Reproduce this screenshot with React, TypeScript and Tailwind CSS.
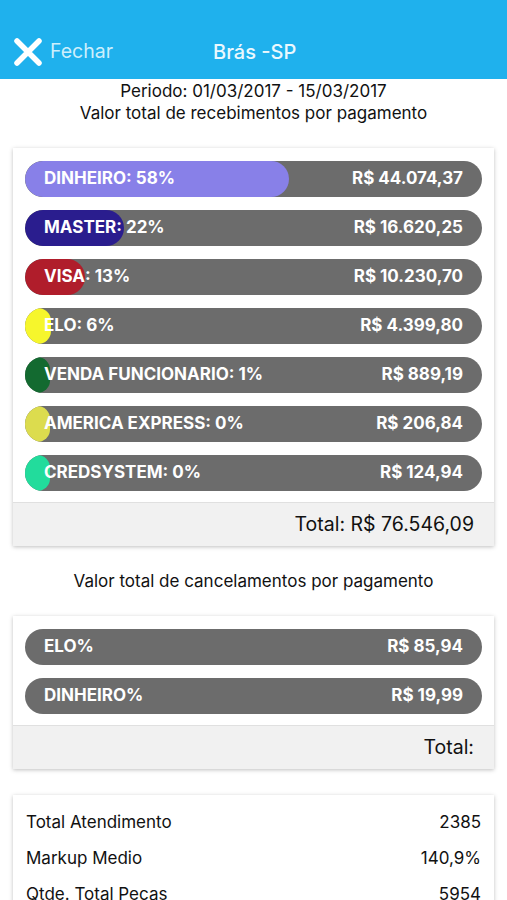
import React from "react";

type Bar = { label: string; value: string; fill: number; color: string };

const recebimentos: Bar[] = [
  { label: "DINHEIRO: 58%", value: "R$ 44.074,37", fill: 264, color: "#8880e8" },
  { label: "MASTER: 22%", value: "R$ 16.620,25", fill: 99, color: "#2a1d8e" },
  { label: "VISA: 13%", value: "R$ 10.230,70", fill: 60, color: "#b01d2b" },
  { label: "ELO: 6%", value: "R$ 4.399,80", fill: 26, color: "#f6f62c" },
  { label: "VENDA FUNCIONARIO: 1%", value: "R$ 889,19", fill: 25, color: "#136a30" },
  { label: "AMERICA EXPRESS: 0%", value: "R$ 206,84", fill: 25, color: "#dcdc4e" },
  { label: "CREDSYSTEM: 0%", value: "R$ 124,94", fill: 25, color: "#22dc9c" },
];

const cancelamentos: Bar[] = [
  { label: "ELO%", value: "R$ 85,94", fill: 0, color: "" },
  { label: "DINHEIRO%", value: "R$ 19,99", fill: 0, color: "" },
];

const resumo = [
  ["Total Atendimento", "2385"],
  ["Markup Medio", "140,9%"],
  ["Qtde. Total Pecas", "5954"],
];

function PayBar({ bar }: { bar: Bar }) {
  return (
    <div className="relative h-[36px] rounded-full bg-[#6c6c6c] overflow-hidden">
      {bar.fill > 0 && (
        <div
          className="absolute left-0 top-0 h-full rounded-full"
          style={{ width: bar.fill, backgroundColor: bar.color }}
        />
      )}
      <div className="relative flex h-full items-center justify-between pl-[19px] pr-[19px] text-[17px] font-bold text-white">
        <span>{bar.label}</span>
        <span>{bar.value}</span>
      </div>
    </div>
  );
}

function Card({ bars, total }: { bars: Bar[]; total: string }) {
  return (
    <div className="mx-[13px] bg-white shadow-[0_1px_4px_rgba(0,0,0,0.25)]">
      <div className="flex flex-col gap-[13px] px-[12px] pt-[13px] pb-[11px]">
        {bars.map((b) => (
          <PayBar key={b.label} bar={b} />
        ))}
      </div>
      <div className="flex h-[44px] items-center justify-end border-t border-[#e0e0e0] bg-[#f1f1f1] pr-[20px] text-[19.5px] text-[#111]">
        {total}
      </div>
    </div>
  );
}

export default function App() {
  return (
    <div className="min-h-[900px] bg-white font-['Inter',sans-serif] text-[#111]">
      <div className="flex h-[79px] items-end bg-[#1fb1ed] pb-[12px]">
        <div className="relative flex w-full items-center">
          <div className="flex items-center pl-[13px]">
            <svg width="30" height="30" viewBox="0 0 30 30">
              <path d="M4 4 L26 26 M26 4 L4 26" stroke="white" strokeWidth="5.5" strokeLinecap="round" />
            </svg>
            <span className="ml-[7px] text-[19.5px] text-[#cdeffc]">Fechar</span>
          </div>
          <span className="absolute left-[213px] text-[20px] font-medium text-[#eaf8fe]">Brás -SP</span>
        </div>
      </div>

      <div className="pt-[1px] text-center text-[17px] leading-[22px]">
        <div>Periodo: 01/03/2017 - 15/03/2017</div>
        <div>Valor total de recebimentos por pagamento</div>
      </div>

      <div className="mt-[24px]">
        <Card bars={recebimentos} total="Total: R$ 76.546,09" />
      </div>

      <div className="mt-[24px] text-center text-[17px] leading-[22px]">
        Valor total de cancelamentos por pagamento
      </div>

      <div className="mt-[24px]">
        <Card bars={cancelamentos} total="Total:" />
      </div>

      <div className="mx-[13px] mt-[26px] bg-white px-[13px] pt-[10px] shadow-[0_1px_4px_rgba(0,0,0,0.25)]">
        {resumo.map(([k, v]) => (
          <div key={k} className="flex h-[36px] items-center justify-between text-[17px]">
            <span>{k}</span>
            <span>{v}</span>
          </div>
        ))}
      </div>
    </div>
  );
}
